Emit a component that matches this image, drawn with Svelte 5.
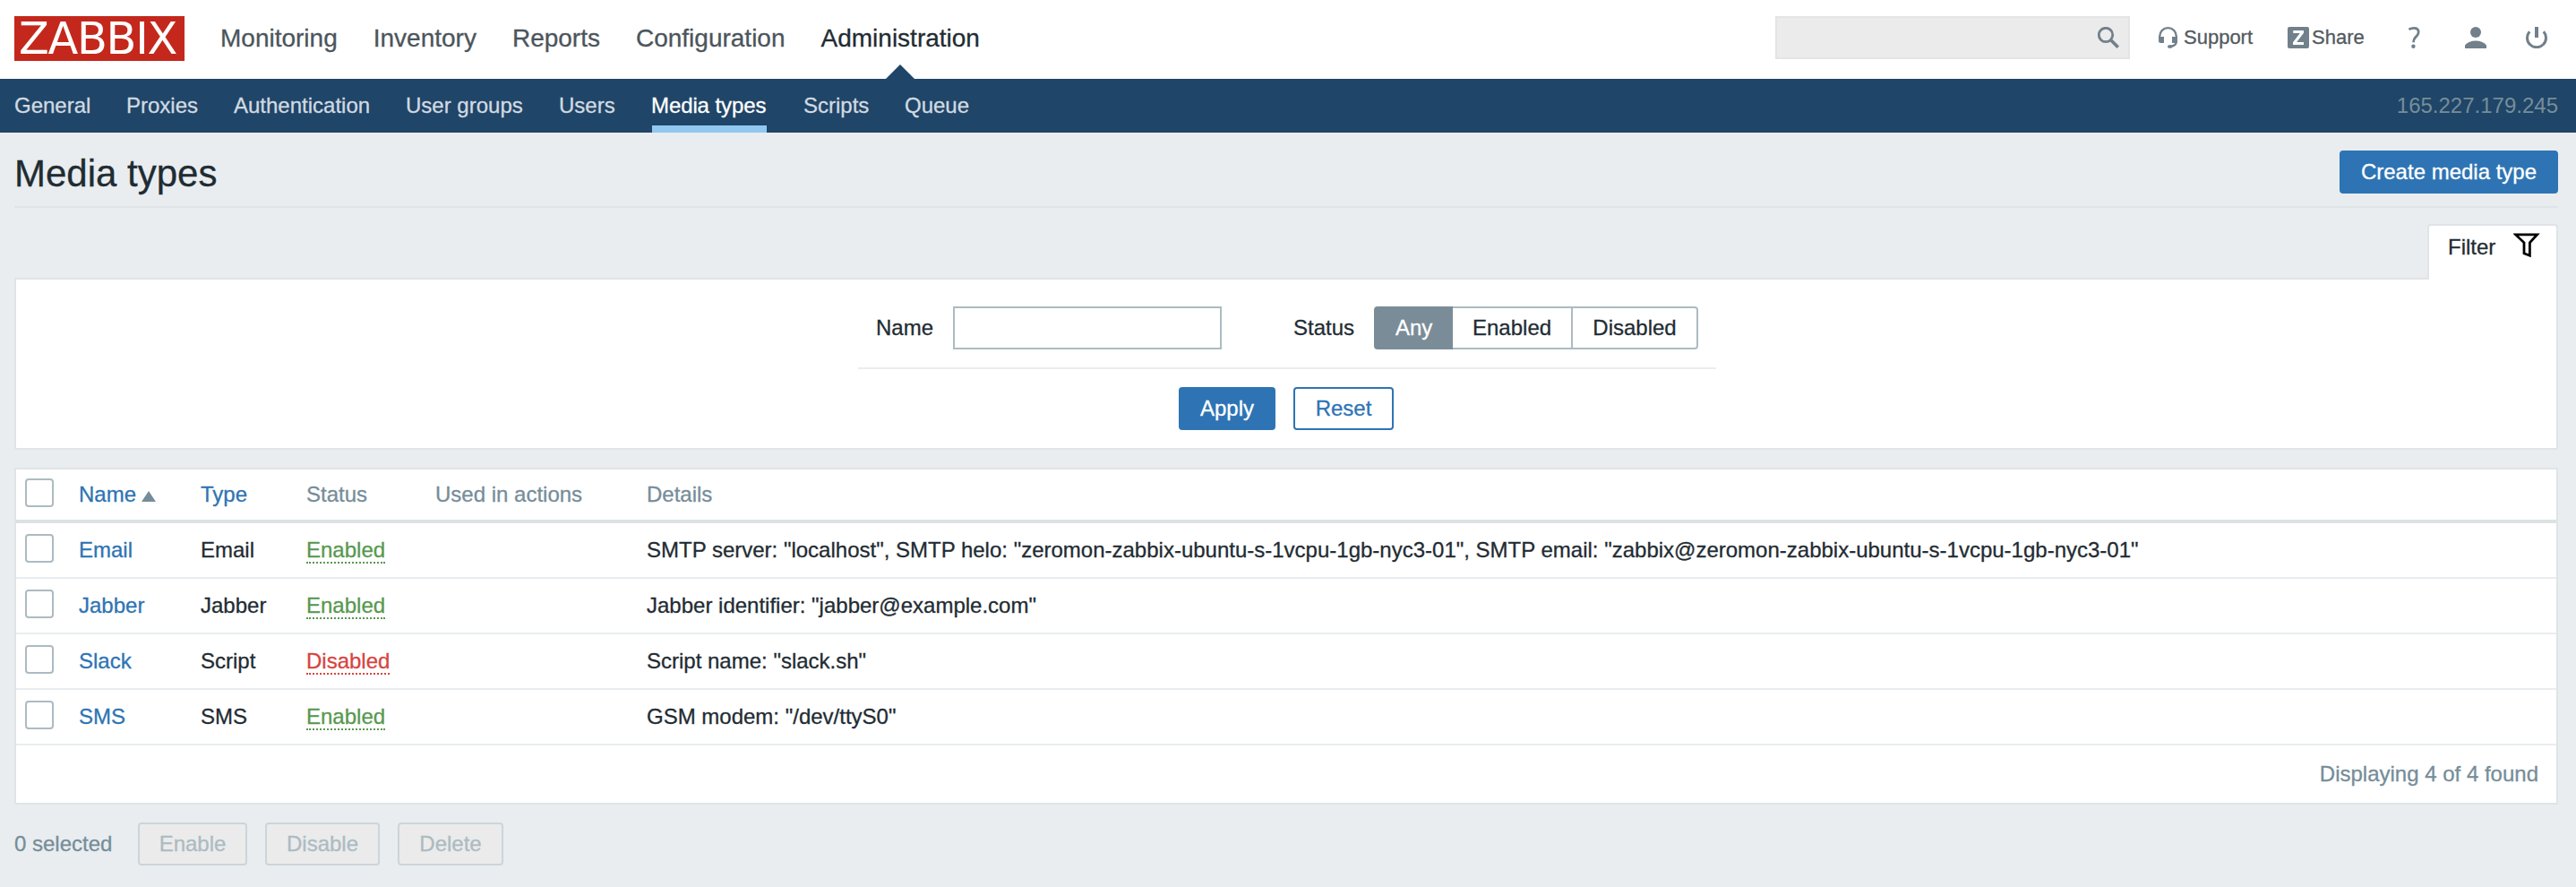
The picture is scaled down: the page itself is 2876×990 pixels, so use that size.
<script>
  const mainMenu = ['Monitoring', 'Inventory', 'Reports', 'Configuration', 'Administration'];
  const subMenu = ['General', 'Proxies', 'Authentication', 'User groups', 'Users', 'Media types', 'Scripts', 'Queue'];
  const statuses = ['Any', 'Enabled', 'Disabled'];
  const rows = [
    { name: 'Email', type: 'Email', enabled: true, details: 'SMTP server: "localhost", SMTP helo: "zeromon-zabbix-ubuntu-s-1vcpu-1gb-nyc3-01", SMTP email: "zabbix@zeromon-zabbix-ubuntu-s-1vcpu-1gb-nyc3-01"' },
    { name: 'Jabber', type: 'Jabber', enabled: true, details: 'Jabber identifier: "jabber@example.com"' },
    { name: 'Slack', type: 'Script', enabled: false, details: 'Script name: "slack.sh"' },
    { name: 'SMS', type: 'SMS', enabled: true, details: 'GSM modem: "/dev/ttyS0"' }
  ];
  let status = $state('Any');
</script>

<div class="page">
  <header>
    <div class="logo">ZABBIX</div>
    <nav class="main">
      {#each mainMenu as item}
        <span class:active={item === 'Administration'}>{item}</span>
      {/each}
    </nav>
    <div class="search">
      <svg width="24" height="24" viewBox="0 0 24 24" fill="none" stroke="#71808a">
        <circle cx="9" cy="9" r="7.7" stroke-width="2.8" />
        <path d="M14.5 14.5L22.7 22.7" stroke-width="3.6" />
      </svg>
    </div>
    <div class="link support">
      <svg width="22" height="24" viewBox="0 0 22 24">
        <path d="M1.2 12V10.5A9.3 9.3 0 0 1 19.8 10.5V16.5C19.8 19.8 17 21.3 13.5 21.8" fill="none" stroke="#71808a" stroke-width="2.3" />
        <path d="M0 11H6V18H2.5Q0 18 0 15.5ZM15 11H21V15.5Q21 18 18.5 18H15Z" fill="#71808a" />
        <rect x="10" y="20.3" width="5.5" height="3.5" rx="1.7" fill="#71808a" />
      </svg>
      <span>Support</span>
    </div>
    <div class="link share">
      <svg width="24" height="24" viewBox="0 0 24 24">
        <rect width="24" height="24" rx="2" fill="#71808a" />
        <path d="M6.3 4H18V6.8L10.2 17H18V20H6V17.2L13.8 7H6.3Z" fill="#fff" />
      </svg>
      <span>Share</span>
    </div>
    <svg class="help" width="14" height="24" viewBox="0 0 14 24">
      <path d="M0.4 2.9Q2.8 1.4 6 1.4C9.4 1.4 11.2 3 11.2 5.8C11.2 8.6 9.6 9.9 8 11.4C6.4 12.8 5.6 14 5.5 17.3" fill="none" stroke="#71808a" stroke-width="2.8" />
      <circle cx="5.4" cy="21.8" r="2.2" fill="#71808a" />
    </svg>
    <svg class="user" width="24" height="24" viewBox="0 0 24 24" fill="#71808a">
      <circle cx="12" cy="6" r="6" />
      <path d="M0 24V20.5C3 17.2 7 15.5 12 15.5S21 17.2 24 20.5V24Z" />
    </svg>
    <svg class="power" width="24" height="24" viewBox="0 0 24 24" fill="none" stroke="#71808a">
      <path d="M4.2 5.2A10.5 10.5 0 1 0 19.8 5.2" stroke-width="3" />
      <path d="M12 0V12" stroke-width="4" />
    </svg>
  </header>

  <div class="subbar">
    <nav class="sub">
      {#each subMenu as item}
        <div><span class:selected={item === 'Media types'}>{item}</span></div>
      {/each}
    </nav>
    <span class="server">165.227.179.245</span>
  </div>

  <main>
    <div class="title">
      <h1>Media types</h1>
      <button class="btn primary create">Create media type</button>
    </div>

    <div class="tabrow">
      <div class="tab">
        <span>Filter</span>
        <svg width="30" height="30" viewBox="0 0 30 30" fill="none" stroke="#000" stroke-width="2.8">
          <path d="M2.6 2.9H26.6L18.4 11.8V26.2L12 23.8V11.8Z" />
        </svg>
      </div>
    </div>

    <section class="filter">
      <div class="fields">
        <label for="name">Name</label>
        <input id="name" type="text" />
        <span class="status-label">Status</span>
        <div class="segments">
          {#each statuses as s}
            <button class:on={s === status} onclick={() => (status = s)}>{s}</button>
          {/each}
        </div>
      </div>
      <div class="actions">
        <button class="btn primary apply">Apply</button>
        <button class="btn reset">Reset</button>
      </div>
    </section>

    <section class="list">
      <div class="row head">
        <i class="check"></i>
        <span class="lnk sorted">Name<b class="arrow"></b></span>
        <span class="lnk">Type</span>
        <span>Status</span>
        <span>Used in actions</span>
        <span>Details</span>
      </div>
      {#each rows as r}
        <div class="row">
          <i class="check"></i>
          <span class="lnk">{r.name}</span>
          <span>{r.type}</span>
          <span><em class:off={!r.enabled}>{r.enabled ? 'Enabled' : 'Disabled'}</em></span>
          <span></span>
          <span>{r.details}</span>
        </div>
      {/each}
      <div class="count">Displaying 4 of 4 found</div>
    </section>

    <div class="bulk">
      <span>0 selected</span>
      <button class="btn" disabled>Enable</button>
      <button class="btn wide" disabled>Disable</button>
      <button class="btn narrow" disabled>Delete</button>
    </div>
  </main>
</div>

<style>
  :global(body) { background: #e9edf0; }
  .page {
    height: 990px;
    overflow: hidden;
    background: #e9edf0;
    color: #1f2c33;
    font: 24px/28px "Liberation Sans", Arial, sans-serif;
    -webkit-text-stroke: 0.3px;
    white-space: nowrap;
  }
  .page * { box-sizing: border-box; }
  svg { display: block; flex: none; }
  button, input { font: inherit; color: inherit; margin: 0; }

  header {
    display: flex;
    align-items: center;
    height: 88px;
    padding: 0 32px 4px 16px;
    background: #fff;
  }
  .logo {
    width: 190px;
    height: 50px;
    margin-top: 2px;
    padding-left: 5px;
    background: #c4281c;
    color: #fff;
    font: 49.4px/51px "DejaVu Sans", sans-serif;
    letter-spacing: -1.3px;
    -webkit-text-stroke: 0;
  }
  .main {
    display: flex;
    gap: 40px;
    margin-left: 40px;
    font-size: 28px;
    line-height: 85px;
    color: #4c555b;
  }
  .main .active { position: relative; color: #1f2c33; }
  .main .active::after {
    content: "";
    position: absolute;
    left: 50%;
    bottom: -3px;
    transform: translateX(-50%);
    border: solid transparent;
    border-width: 0 16px 16px;
    border-bottom-color: #1f4568;
  }
  .search {
    display: flex;
    align-items: center;
    justify-content: flex-end;
    width: 396px;
    height: 48px;
    margin-left: auto;
    padding-right: 10px;
    border: 2px solid #e2e4e5;
    background: #ebebeb;
  }
  .link { display: flex; align-items: center; font-size: 22px; color: #525a60; }
  .support { width: 144px; margin-left: 32px; }
  .support span { margin-left: 6px; }
  .share { width: 135px; }
  .share span { margin-left: 3px; }
  .help { margin-right: 49px; }
  .user { margin-right: 44px; }

  .subbar {
    display: flex;
    justify-content: space-between;
    height: 60px;
    padding: 0 20px 0 16px;
    background: #1f4568;
    line-height: 60px;
    color: #d2dae1;
  }
  .sub { display: grid; grid-template-columns: 125px 120px 192px 171px 104px 169px 113px 90px; }
  .selected {
    display: block;
    width: 128px;
    height: 60px;
    color: #fff;
    text-indent: -1px;
    letter-spacing: -0.1px;
    box-shadow: inset 0 -8px #90c8f0;
  }
  .server { color: #768d99; -webkit-text-stroke: 0; }

  main { padding: 0 20px 0 16px; }
  .title {
    display: flex;
    justify-content: space-between;
    align-items: center;
    height: 84px;
    padding-top: 6px;
    border-bottom: 2px solid #dfe4e7;
  }
  h1 { margin: 4px 0 0; font-size: 42px; font-weight: 400; line-height: 48px; }
  .btn {
    height: 48px;
    padding: 0;
    border: 2px solid #2e74b4;
    border-radius: 4px;
    background: #fff;
    color: #2e74b4;
    line-height: 44px;
    text-align: center;
  }
  .primary { background: #2e74b4; color: #fff; }
  .create { width: 244px; }

  .tabrow { display: flex; justify-content: flex-end; height: 78px; padding-top: 18px; }
  .tab {
    position: relative;
    display: flex;
    justify-content: space-between;
    width: 146px;
    height: 62px;
    padding: 7px 18px 0 21px;
    border: 2px solid #dfe4e7;
    border-bottom: 0;
    border-radius: 4px 4px 0 0;
    background: #fff;
    line-height: 34px;
  }
  .filter {
    display: flex;
    flex-direction: column;
    align-items: center;
    height: 192px;
    padding-top: 30px;
    border: 2px solid #dfe4e7;
    background: #fff;
  }
  .fields {
    display: flex;
    align-items: center;
    width: 958px;
    height: 70px;
    margin-left: 2px;
    padding: 0 20px;
    padding-bottom: 20px;
    border-bottom: 2px solid #e9edf0;
  }
  .fields label { width: 86px; }
  .fields input {
    width: 300px;
    height: 48px;
    border: 2px solid #acbbc2;
    background: #fff;
    outline: 0;
  }
  .status-label { width: 90px; margin-left: 80px; }
  .segments { display: flex; }
  .segments button {
    height: 48px;
    padding: 0 22px;
    border: 2px solid #acbbc2;
    background: #fff;
    line-height: 44px;
    width: 136px;
    margin-left: -2px;
  }
  .segments button:first-child { width: 88px; margin: 0; border-radius: 4px 0 0 4px; }
  .segments button:last-child { width: 142px; border-radius: 0 4px 4px 0; }
  .segments .on { position: relative; background: #7a8c98; border-color: #7a8c98; color: #fff; }
  .actions { display: flex; gap: 20px; padding-top: 20px; }
  .apply { width: 108px; }
  .reset { width: 112px; }

  .list { height: 376px; margin-top: 20px; border: 2px solid #dfe4e7; background: #fff; }
  .row {
    display: grid;
    grid-template-columns: 60px 136px 118px 144px 236px 1fr;
    height: 62px;
    padding-left: 10px;
    border-bottom: 2px solid #e9edf0;
    line-height: 60px;
  }
  .head { height: 60px; border-bottom: 4px solid #dce2e4; line-height: 56px; color: #768d99; }
  .check {
    width: 32px;
    height: 32px;
    margin-top: 12px;
    border: 2px solid #acbbc2;
    border-radius: 4px;
    background: #fff;
  }
  .head .check { margin-top: 10px; }
  .lnk { color: #2e74b4; }
  .arrow {
    display: inline-block;
    margin-left: 6px;
    border: solid transparent;
    border-width: 0 8px 12px;
    border-bottom-color: #768d99;
  }
  em {
    font-style: normal;
    color: #58984f;
    border-bottom: 2px dotted #58984f;
  }
  em.off { color: #d64540; border-color: #d64540; }
  .count { padding-right: 20px; line-height: 64px; text-align: right; color: #768d99; }

  .bulk { display: flex; align-items: center; height: 48px; margin-top: 20px; color: #768d99; }
  .bulk span { width: 138px; }
  .bulk .btn {
    width: 122px;
    margin-right: 20px;
    border-color: #ccd5d9;
    background: #ebebeb;
    color: #acbbc2;
  }
  .bulk .wide { width: 128px; }
  .bulk .narrow { width: 118px; }
</style>
